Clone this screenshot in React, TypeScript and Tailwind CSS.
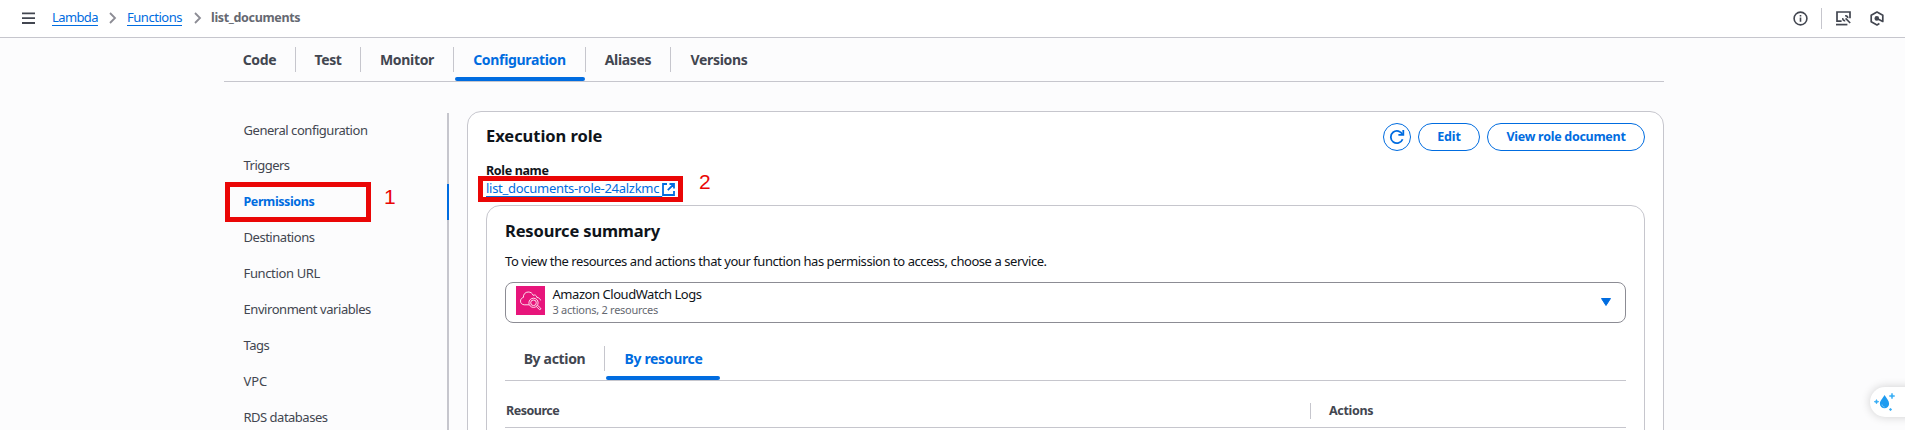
import type { ReactNode } from "react";

const navItems = [
  { label: "General configuration", cls: "h-[35px] leading-[36px] tracking-[-0.46px]" },
  { label: "Triggers", cls: "h-9 leading-9 tracking-[-0.52px]" },
  { label: "Permissions", cls: "h-9 leading-[38px] text-[12.5px] font-bold tracking-[-0.4px] text-[#006ce0]" },
  { label: "Destinations", cls: "h-9 leading-9 tracking-[-0.47px]" },
  { label: "Function URL", cls: "h-9 leading-9 tracking-[-0.36px]" },
  { label: "Environment variables", cls: "h-9 leading-9 tracking-[-0.44px]" },
  { label: "Tags", cls: "h-9 leading-9 tracking-[-0.5px]" },
  { label: "VPC", cls: "h-9 leading-9 tracking-[-0.13px]" },
  { label: "RDS databases", cls: "h-9 leading-9 tracking-[-0.5px]" },
];

function Tab({ children, width, active, bar = "w-full" }: { children: ReactNode; width: string; active?: boolean; bar?: string }) {
  return (
    <div className={`relative flex h-full items-center justify-center text-sm/5 font-bold tracking-[-0.33px] ${width} ${active ? "text-[#006ce0]" : "text-[#424650]"}`}>
      {children}
      {active && <span className={`absolute bottom-0 left-px h-1 rounded-full bg-[#006ce0] ${bar}`} />}
    </div>
  );
}

function Divider() {
  return <div className="h-[25px] w-px shrink-0 bg-[#c6c6cd]" />;
}

function Chevron({ className }: { className: string }) {
  return (
    <svg className={className} width="8" height="12" viewBox="0 0 8 12" fill="none" stroke="#8c8c94" strokeWidth="1.8">
      <path d="M1 1l5 5-5 5" />
    </svg>
  );
}

function Header() {
  return (
    <header className="flex h-[38px] shrink-0 items-start border-b border-[#c6c6cd] bg-white">
      <svg className="mt-[12px] ml-[22px]" width="13" height="12" viewBox="0 0 13 12" fill="none" stroke="#424650" strokeWidth="1.8">
        <path d="M0 1.3h13M0 6.2h13M0 11h13" />
      </svg>
      <a className="mt-[7px] ml-[17px] w-[46px] text-[13px]/5 tracking-[-0.6px] whitespace-nowrap text-[#006ce0] underline decoration-1 underline-offset-[3px]">Lambda</a>
      <Chevron className="mt-[12px] ml-[11px]" />
      <a className="mt-[7px] ml-[10px] w-[55px] text-[13px]/5 tracking-[-0.47px] whitespace-nowrap text-[#006ce0] underline decoration-1 underline-offset-[3px]">Functions</a>
      <Chevron className="mt-[12px] ml-[12px]" />
      <span className="mt-2 ml-[9px] text-[12.5px]/5 font-bold tracking-[-0.35px] text-[#656871]">list_documents</span>
      <div className="mt-[7px] ml-auto flex h-[22px] items-center pr-[21px]">
        <svg width="15" height="15" viewBox="0 0 15 15" fill="none" stroke="#424650" strokeWidth="1.6">
          <circle cx="7.5" cy="7.5" r="6.4" />
          <path d="M7.5 6.6v4.2M7.5 3.9v1.6" />
        </svg>
        <div className="ml-[13px] h-[21px] w-px bg-[#c6c6cd]" />
        <svg className="ml-[14px]" width="15" height="15" viewBox="0 0 15 15" fill="none" stroke="#424650" strokeWidth="1.7">
          <path d="M5.6 10.1H1V1h13v6.2" />
          <path d="M0 13.6h11.4" />
          <path d="M9.6 7.4l4.6 4.6M9.2 4.9c1.6-.3 2.7.7 2.5 2.3M6.8 7.2c-.2 1.7.9 2.7 2.4 2.4" strokeWidth="1.6" />
        </svg>
        <svg className="ml-[19px]" width="14" height="15" viewBox="0 0 14 15" fill="none" stroke="#424650" strokeWidth="1.7" strokeLinejoin="round">
          <path d="M9.4 12.6L7 13.9 1.2 10.7V4.2L7 1l5.8 3.2v6.3L7 7.5" />
          <circle cx="6.8" cy="7.4" r="1.5" fill="#424650" />
        </svg>
      </div>
    </header>
  );
}

function CloudWatchIcon() {
  return (
    <svg width="29" height="29" viewBox="0 0 29 29" fill="none" stroke="#fff" strokeOpacity=".85" strokeWidth="1">
      <path d="M0 0h29v29H0z" fill="#e7157b" stroke="none" />
      <path d="M13 18.8H8.2C5.9 18.5 4.5 17.2 4.5 15.1c0-1.9 1.2-3.2 2.9-3.7C7.2 8.3 9.3 6 12.2 6c2.5 0 4.1 1.2 5 3.4 1.6-1 3.5-.1 3.7 2 1.9.2 3.3 1.3 3.7 3" />
      <circle cx="17.5" cy="16.8" r="4.6" />
      <circle cx="17.5" cy="16.8" r="2.8" />
      <path d="M20.3 20.5l3 2.9c.9.6 1.9-.4 1.3-1.3l-3.1-2.8" />
    </svg>
  );
}

export default function App() {
  return (
    <div className="relative flex h-[430px] w-[1905px] flex-col overflow-hidden bg-[#fcfcfd] font-['Noto_Sans',sans-serif] text-[13px] text-[#0f141a]">
      <Header />
      <nav className="ml-[224px] flex h-[44px] w-[1440px] shrink-0 items-center border-b border-[#c6c6cd]">
        <Tab width="w-[71px]">Code</Tab>
        <Divider />
        <Tab width="w-[64px]">Test</Tab>
        <Divider />
        <Tab width="w-[92px]">Monitor</Tab>
        <Divider />
        <Tab width="w-[131px]" active bar="w-[130px]">Configuration</Tab>
        <Divider />
        <Tab width="w-[84px]">Aliases</Tab>
        <Divider />
        <Tab width="w-[96px]">Versions</Tab>
      </nav>

      <main className="ml-[224px] flex h-[348px] w-[1440px] shrink-0">
        <aside className="flex w-[225px] shrink-0 pt-[30px]">
          <ul className="w-[223px] pl-[19.5px] text-[#424650]">
            {navItems.map((n) => (
              <li key={n.label} className={`whitespace-nowrap ${n.cls}`}>{n.label}</li>
            ))}
          </ul>
          <div className="mt-px h-[330px] w-[2px] bg-[#c6c6cd] pt-[71px]">
            <div className="h-9 bg-[#006ce0]" />
          </div>
        </aside>

        <section className="mt-[29px] ml-[18px] h-[360px] w-[1197px] shrink-0 rounded-t-[14px] border border-[#c6c6cd] bg-white px-[18px] pt-[11px]">
          <div className="flex h-7 items-start">
            <h2 className="text-[16.5px]/[25px] font-bold tracking-[-0.05px]">Execution role</h2>
            <div className="ml-auto flex text-[12.5px] font-bold text-[#006ce0]">
              <button className="flex size-7 items-center justify-center rounded-full border-[1.5px] border-[#006ce0]">
                <svg width="16" height="16" viewBox="0 0 16 16" fill="none" stroke="#006ce0" strokeWidth="1.8">
                  <path d="M13.6 10.2A6.1 6.1 0 1 1 13.5 5.6" />
                  <path d="M14.3 1v4.9H9.4" />
                </svg>
              </button>
              <button className="ml-[7px] flex h-7 w-[62px] items-center justify-center rounded-full border-[1.5px] border-[#006ce0] pt-px tracking-[-0.13px]">Edit</button>
              <button className="ml-[7px] flex h-7 w-[158px] items-center justify-center rounded-full border-[1.5px] border-[#006ce0] pt-px tracking-[-0.28px] whitespace-nowrap">View role document</button>
            </div>
          </div>

          <div className="mt-[11px] h-[17px] text-[12.5px]/[18px] font-bold tracking-[-0.35px]">Role name</div>
          <div className="flex h-[18px] text-[#006ce0]">
            <a className="leading-[18px] tracking-[-0.28px] whitespace-pre underline decoration-1 underline-offset-[3px] [text-decoration-skip-ink:none]">{"list_documents-role-24alzkmc "}</a>
            <svg className="mt-[4px]" width="13" height="13" viewBox="0 0 13 13" fill="none" stroke="#006ce0" strokeWidth="1.8">
              <path d="M5 1H1v11h11V8M7.5 1H12v4.5M12 1L5.8 7.2" />
            </svg>
          </div>

          <section className="mt-2 h-[260px] rounded-t-[14px] border border-[#c6c6cd] px-[18px] pt-[13px]">
            <h3 className="text-[16.5px]/6 font-bold tracking-[-0.16px]">Resource summary</h3>
            <p className="mt-2 leading-5 tracking-[-0.44px]">
              To view the resources and actions that your function has permission to access, choose a service.
            </p>
            <div className="mt-[11px] flex h-[41px] w-[1121px] rounded-lg border border-[#8c8c94] pt-[3px] pl-[10px]">
              <CloudWatchIcon />
              <div className="ml-[7.5px] flex flex-col">
                <span className="leading-4 tracking-[-0.45px]">Amazon CloudWatch Logs</span>
                <span className="text-[11px]/[15px] tracking-[-0.27px] text-[#656871]">3 actions, 2 resources</span>
              </div>
              <svg className="mt-[12px] mr-[14px] ml-auto" width="10" height="8" viewBox="0 0 10 8">
                <path d="M.5.5h9L5 7.5z" fill="#006ce0" stroke="#006ce0" strokeLinejoin="round" />
              </svg>
            </div>

            <div className="mt-[14px] flex h-[44px] w-[1121px] items-center border-b border-[#c6c6cd]">
              <Tab width="w-[99px]">By action</Tab>
              <Divider />
              <Tab width="w-[117px]" active bar="w-[114px]">By resource</Tab>
            </div>

            <div className="flex h-[47px] w-[1121px] items-start border-b border-[#c6c6cd] pt-5 text-[12.5px]/5 font-bold text-[#424650]">
              <div className="w-[805px] pl-px tracking-[-0.5px]">Resource</div>
              <div className="mt-[2px] h-4 w-px bg-[#c6c6cd]" />
              <div className="ml-[18px] tracking-[-0.34px]">Actions</div>
            </div>
          </section>
        </section>
      </main>

      <div className="absolute top-[182px] left-[225px] h-10 w-[146px] border-[5px] border-[#ea0606]" />
      <span className="absolute top-[185px] left-[384px] font-['Liberation_Sans',sans-serif] text-[21px]/6 text-[#ea0606]">1</span>
      <div className="absolute top-[176px] left-[478px] h-[26px] w-[205px] border-[5px] border-[#ea0606]" />
      <span className="absolute top-[170px] left-[699px] font-['Liberation_Sans',sans-serif] text-[21px]/6 text-[#ea0606]">2</span>

      <div className="absolute top-[387px] left-[1870px] h-[30px] w-12 rounded-l-full bg-white shadow-[0_0_10px_rgba(0,0,0,0.18)]">
        <svg width="35" height="30" viewBox="0 0 35 30" fill="#1e9bf0">
          <path d="M14.5 8c2 3.4 4.6 5.5 4.6 8.7a4.6 4.6 0 0 1-9.2 0C9.9 13.5 12.8 11.4 14.5 8z" />
          <path d="M12 17.5c.3 1.5 1.2 2.3 2.5 2.5" fill="none" stroke="#7cc8fa" strokeWidth="1" />
          <path d="M22 6l.8 2.2L25 9l-2.2.8L22 12l-.8-2.2L19 9l2.2-.8zM6.5 12.5l.6 1.5 1.9.7-1.9.7-.6 1.6-.7-1.6-1.8-.7 1.8-.7zM20.5 21l.4 1.1 1.1.4-1.1.4-.4 1.1-.4-1.1-1.1-.4 1.1-.4z" fill="#35acf5" stroke="#35acf5" strokeWidth=".5" />
        </svg>
      </div>
    </div>
  );
}
